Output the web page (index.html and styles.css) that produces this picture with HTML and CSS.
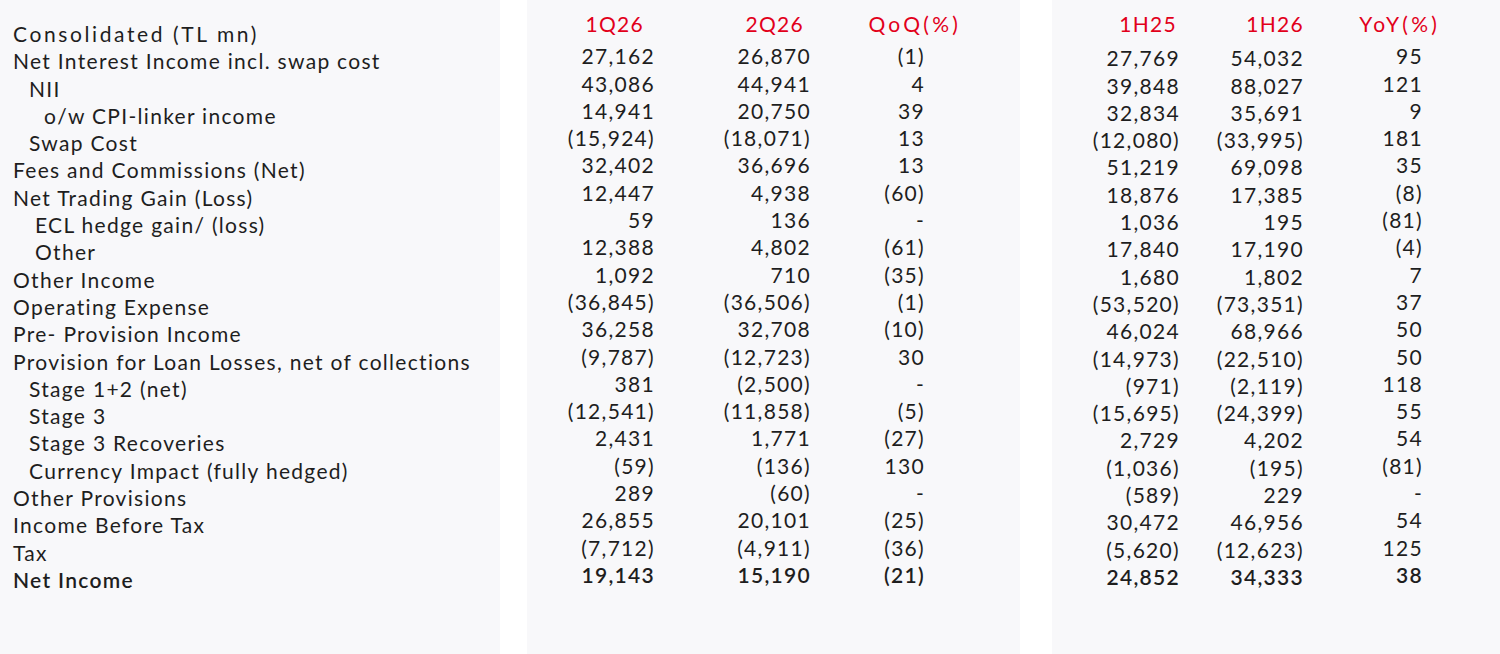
FILE: index.html
```html
<!DOCTYPE html>
<html lang="en">
<head>
<meta charset="utf-8">
<title>Consolidated (TL mn)</title>
<link rel="stylesheet" href="styles.css">
</head>
<body>
<div class="page">
  <section class="panel labels">
    <div class="lab head">Consolidated (TL mn)</div>
    <div class="lab">Net Interest Income incl. swap cost</div>
    <div class="lab i1">NII</div>
    <div class="lab i3">o/w CPI-linker income</div>
    <div class="lab i1">Swap Cost</div>
    <div class="lab">Fees and Commissions (Net)</div>
    <div class="lab">Net Trading Gain (Loss)</div>
    <div class="lab i2">ECL hedge gain/ (loss)</div>
    <div class="lab i2">Other</div>
    <div class="lab">Other Income</div>
    <div class="lab">Operating Expense</div>
    <div class="lab">Pre- Provision Income</div>
    <div class="lab">Provision for Loan Losses, net of collections</div>
    <div class="lab i1">Stage 1+2 (net)</div>
    <div class="lab i1">Stage 3</div>
    <div class="lab i1">Stage 3 Recoveries</div>
    <div class="lab i1">Currency Impact (fully hedged)</div>
    <div class="lab">Other Provisions</div>
    <div class="lab">Income Before Tax</div>
    <div class="lab">Tax</div>
    <div class="lab total">Net Income</div>
  </section>

  <section class="panel quarter">
    <div class="col c-q1">
      <div class="hd">1Q26</div>
      <div class="v">27,162</div><div class="v">43,086</div><div class="v">14,941</div><div class="v">(15,924)</div><div class="v">32,402</div><div class="v">12,447</div><div class="v">59</div><div class="v">12,388</div><div class="v">1,092</div><div class="v">(36,845)</div><div class="v">36,258</div><div class="v">(9,787)</div><div class="v">381</div><div class="v">(12,541)</div><div class="v">2,431</div><div class="v">(59)</div><div class="v">289</div><div class="v">26,855</div><div class="v">(7,712)</div><div class="v total">19,143</div>
    </div>
    <div class="col c-q2">
      <div class="hd">2Q26</div>
      <div class="v">26,870</div><div class="v">44,941</div><div class="v">20,750</div><div class="v">(18,071)</div><div class="v">36,696</div><div class="v">4,938</div><div class="v">136</div><div class="v">4,802</div><div class="v">710</div><div class="v">(36,506)</div><div class="v">32,708</div><div class="v">(12,723)</div><div class="v">(2,500)</div><div class="v">(11,858)</div><div class="v">1,771</div><div class="v">(136)</div><div class="v">(60)</div><div class="v">20,101</div><div class="v">(4,911)</div><div class="v total">15,190</div>
    </div>
    <div class="col c-qoq">
      <div class="hd wide">QoQ(%)</div>
      <div class="v">(1)</div><div class="v">4</div><div class="v">39</div><div class="v">13</div><div class="v">13</div><div class="v">(60)</div><div class="v">-</div><div class="v">(61)</div><div class="v">(35)</div><div class="v">(1)</div><div class="v">(10)</div><div class="v">30</div><div class="v">-</div><div class="v">(5)</div><div class="v">(27)</div><div class="v">130</div><div class="v">-</div><div class="v">(25)</div><div class="v">(36)</div><div class="v total">(21)</div>
    </div>
  </section>

  <section class="panel half">
    <div class="col c-h1">
      <div class="hd">1H25</div>
      <div class="v">27,769</div><div class="v">39,848</div><div class="v">32,834</div><div class="v">(12,080)</div><div class="v">51,219</div><div class="v">18,876</div><div class="v">1,036</div><div class="v">17,840</div><div class="v">1,680</div><div class="v">(53,520)</div><div class="v">46,024</div><div class="v">(14,973)</div><div class="v">(971)</div><div class="v">(15,695)</div><div class="v">2,729</div><div class="v">(1,036)</div><div class="v">(589)</div><div class="v">30,472</div><div class="v">(5,620)</div><div class="v total">24,852</div>
    </div>
    <div class="col c-h2">
      <div class="hd">1H26</div>
      <div class="v">54,032</div><div class="v">88,027</div><div class="v">35,691</div><div class="v">(33,995)</div><div class="v">69,098</div><div class="v">17,385</div><div class="v">195</div><div class="v">17,190</div><div class="v">1,802</div><div class="v">(73,351)</div><div class="v">68,966</div><div class="v">(22,510)</div><div class="v">(2,119)</div><div class="v">(24,399)</div><div class="v">4,202</div><div class="v">(195)</div><div class="v">229</div><div class="v">46,956</div><div class="v">(12,623)</div><div class="v total">34,333</div>
    </div>
    <div class="col c-yoy">
      <div class="hd wide">YoY(%)</div>
      <div class="v">95</div><div class="v">121</div><div class="v">9</div><div class="v">181</div><div class="v">35</div><div class="v">(8)</div><div class="v">(81)</div><div class="v">(4)</div><div class="v">7</div><div class="v">37</div><div class="v">50</div><div class="v">50</div><div class="v">118</div><div class="v">55</div><div class="v">54</div><div class="v">(81)</div><div class="v">-</div><div class="v">54</div><div class="v">125</div><div class="v total">38</div>
    </div>
  </section>
</div>
</body>
</html>
```
FILE: styles.css
```css
html, body {
  margin: 0;
  padding: 0;
  background: #ffffff;
}
body {
  font-family: Lato, "Noto Sans", "Liberation Sans", sans-serif;
  font-size: 21px;
  letter-spacing: 1.3px;
  color: #1e1e1e;
}
.page {
  display: flex;
  width: 1500px;
  height: 654px;
  overflow: hidden;
}
.panel {
  background: #f8f8fa;
  height: 654px;
  box-sizing: border-box;
}
.labels {
  width: 500px;
  padding: 20px 0 0 13px;
}
.quarter {
  width: 493px;
  margin-left: 27px;
  display: flex;
}
.half {
  width: 448px;
  margin-left: 32px;
  display: flex;
}
.lab {
  height: 27.3px;
  line-height: 27.3px;
  white-space: nowrap;
}
.lab.head { letter-spacing: 2.6px; }
.lab.i1 { padding-left: 16px; }
.lab.i2 { padding-left: 22px; }
.lab.i3 { padding-left: 31px; }
.total { font-weight: 600; }

.col {
  display: flex;
  flex-direction: column;
  align-items: flex-end;
  padding-top: 10px;
}
.hd {
  color: #e2001a;
  height: 27.3px;
  line-height: 27.3px;
  margin-bottom: 5px;
  white-space: nowrap;
  letter-spacing: 1.3px;
}
.hd.wide { letter-spacing: 3.2px; }
.v {
  height: 27.3px;
  line-height: 27.3px;
  white-space: nowrap;
  margin-right: -1px;
}
.c-q1 { width: 127px; }
.c-q1 .hd { margin-right: 10px; }
.c-q2 { width: 156px; }
.c-q2 .hd { margin-right: 6px; }
.c-qoq { width: 114px; }
.c-qoq .hd { margin-right: -37px; }

.c-h1 { width: 127px; }
.c-h1 .hd { margin-right: 2px; margin-bottom: 7px; }
.c-h2 { width: 124px; }
.c-h2 .hd { margin-right: -1px; margin-bottom: 7px; }
.c-yoy { width: 119px; }
.c-yoy .hd { margin-right: -18px; }
```
